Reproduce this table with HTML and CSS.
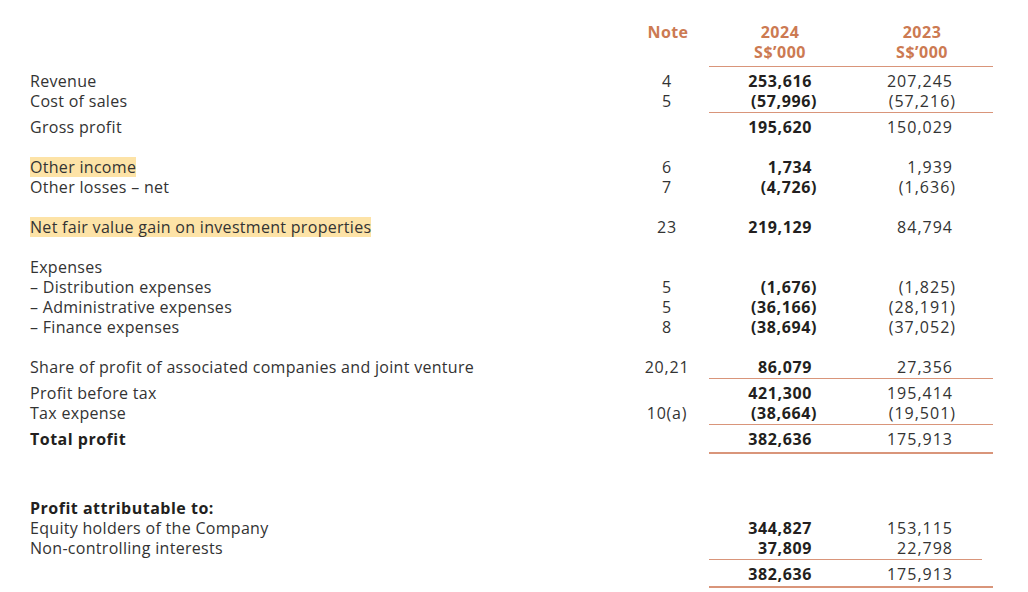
FILE: index.html
```html
<!DOCTYPE html>
<html lang="en">
<head>
<meta charset="utf-8">
<title>Consolidated Statement of Profit or Loss</title>
<link rel="stylesheet" href="styles.css">
</head>
<body>
<div class="statement">
  <div class="row head">
    <div class="label"></div>
    <div class="note">Note</div>
    <div class="amt">2024</div>
    <div class="amt">2023</div>
  </div>
  <div class="row head">
    <div class="label"></div>
    <div class="note"></div>
    <div class="amt">S$’000</div>
    <div class="amt">S$’000</div>
  </div>
  <div class="rule rule-head"></div>

  <div class="row first">
    <div class="label">Revenue</div>
    <div class="note">4</div>
    <div class="amt cur">253,616</div>
    <div class="amt prev">207,245</div>
  </div>
  <div class="row">
    <div class="label">Cost of sales</div>
    <div class="note">5</div>
    <div class="amt cur">(57,996<span class="cp">)</span></div>
    <div class="amt prev">(57,216<span class="cp">)</span></div>
  </div>
  <div class="rule"></div>
  <div class="row after-rule">
    <div class="label">Gross profit</div>
    <div class="note"></div>
    <div class="amt cur">195,620</div>
    <div class="amt prev">150,029</div>
  </div>

  <div class="row gap">
    <div class="label"><span class="mark">Other income</span></div>
    <div class="note">6</div>
    <div class="amt cur">1,734</div>
    <div class="amt prev">1,939</div>
  </div>
  <div class="row">
    <div class="label">Other losses – net</div>
    <div class="note">7</div>
    <div class="amt cur">(4,726<span class="cp">)</span></div>
    <div class="amt prev">(1,636<span class="cp">)</span></div>
  </div>

  <div class="row gap">
    <div class="label"><span class="mark">Net fair value gain on investment properties</span></div>
    <div class="note">23</div>
    <div class="amt cur">219,129</div>
    <div class="amt prev">84,794</div>
  </div>

  <div class="row gap">
    <div class="label">Expenses</div>
    <div class="note"></div>
    <div class="amt cur"></div>
    <div class="amt prev"></div>
  </div>
  <div class="row">
    <div class="label">– Distribution expenses</div>
    <div class="note">5</div>
    <div class="amt cur">(1,676<span class="cp">)</span></div>
    <div class="amt prev">(1,825<span class="cp">)</span></div>
  </div>
  <div class="row">
    <div class="label">– Administrative expenses</div>
    <div class="note">5</div>
    <div class="amt cur">(36,166<span class="cp">)</span></div>
    <div class="amt prev">(28,191<span class="cp">)</span></div>
  </div>
  <div class="row">
    <div class="label">– Finance expenses</div>
    <div class="note">8</div>
    <div class="amt cur">(38,694<span class="cp">)</span></div>
    <div class="amt prev">(37,052<span class="cp">)</span></div>
  </div>

  <div class="row gap">
    <div class="label">Share of profit of associated companies and joint venture</div>
    <div class="note">20,21</div>
    <div class="amt cur">86,079</div>
    <div class="amt prev">27,356</div>
  </div>
  <div class="rule"></div>
  <div class="row after-rule">
    <div class="label">Profit before tax</div>
    <div class="note"></div>
    <div class="amt cur">421,300</div>
    <div class="amt prev">195,414</div>
  </div>
  <div class="row">
    <div class="label">Tax expense</div>
    <div class="note">10(a)</div>
    <div class="amt cur">(38,664<span class="cp">)</span></div>
    <div class="amt prev">(19,501<span class="cp">)</span></div>
  </div>
  <div class="rule"></div>
  <div class="row after-rule">
    <div class="label strong">Total profit</div>
    <div class="note"></div>
    <div class="amt cur">382,636</div>
    <div class="amt prev">175,913</div>
  </div>
  <div class="rule thick"></div>

  <div class="row big-gap">
    <div class="label strong">Profit attributable to:</div>
    <div class="note"></div>
    <div class="amt cur"></div>
    <div class="amt prev"></div>
  </div>
  <div class="row">
    <div class="label">Equity holders of the Company</div>
    <div class="note"></div>
    <div class="amt cur">344,827</div>
    <div class="amt prev">153,115</div>
  </div>
  <div class="row">
    <div class="label">Non-controlling interests</div>
    <div class="note"></div>
    <div class="amt cur">37,809</div>
    <div class="amt prev">22,798</div>
  </div>
  <div class="rule short"></div>
  <div class="row after-rule">
    <div class="label"></div>
    <div class="note"></div>
    <div class="amt cur">382,636</div>
    <div class="amt prev">175,913</div>
  </div>
  <div class="rule thick last"></div>
</div>
</body>
</html>
```

FILE: styles.css
```css
html, body {
  margin: 0;
  padding: 0;
  background: #ffffff;
}

body {
  font-family: "Open Sans", "Noto Sans", "Liberation Sans", sans-serif;
  font-size: 16px;
  font-weight: 400;
  letter-spacing: 0.3px;
  color: #333333;
}

.statement {
  padding: 22px 0 0 30px;
  width: 963px;
}

.row {
  display: grid;
  grid-template-columns: 597px 82px 142px 142px;
  height: 20px;
  line-height: 20px;
  white-space: nowrap;
}

.row.first { margin-top: 4px; }
.row.after-rule { margin-top: 4px; }
.row.gap { margin-top: 20px; }
.row.big-gap { margin-top: 44px; }

.label {
  text-align: left;
}

.label.strong {
  font-weight: 700;
  letter-spacing: 0.5px;
  color: #231f20;
}

.mark {
  background: #fde3a7;
  display: inline-block;
  line-height: 20px;
}

.note {
  text-align: center;
  padding-right: 2px;
  letter-spacing: 0.8px;
}

.amt {
  text-align: right;
  padding-right: 39px;
}

.amt.cur {
  font-weight: 700;
  letter-spacing: 0.6px;
  color: #231f20;
}

.amt.prev {
  padding-right: 40px;
  letter-spacing: 1px;
}

.amt.cur .cp { margin-right: -5px; }
.amt.prev .cp { margin-right: -3px; }

.head {
  color: #cc7a52;
  font-weight: 700;
}

.head .amt,
.head .amt.prev {
  text-align: center;
  padding-right: 0;
  letter-spacing: 0.5px;
}

.head .note {
  padding-right: 0;
  text-align: center;
  letter-spacing: 0.4px;
}

.rule {
  margin-left: 679px;
  width: 284px;
  height: 1px;
  margin-top: 1px;
  background: #d9957a;
}

.rule.rule-head {
  margin-top: 4px;
}

.rule.short {
  width: 273px;
}

.rule.thick {
  height: 2px;
  margin-top: 3px;
}

.rule.thick.last {
  margin-top: 2px;
}
```
